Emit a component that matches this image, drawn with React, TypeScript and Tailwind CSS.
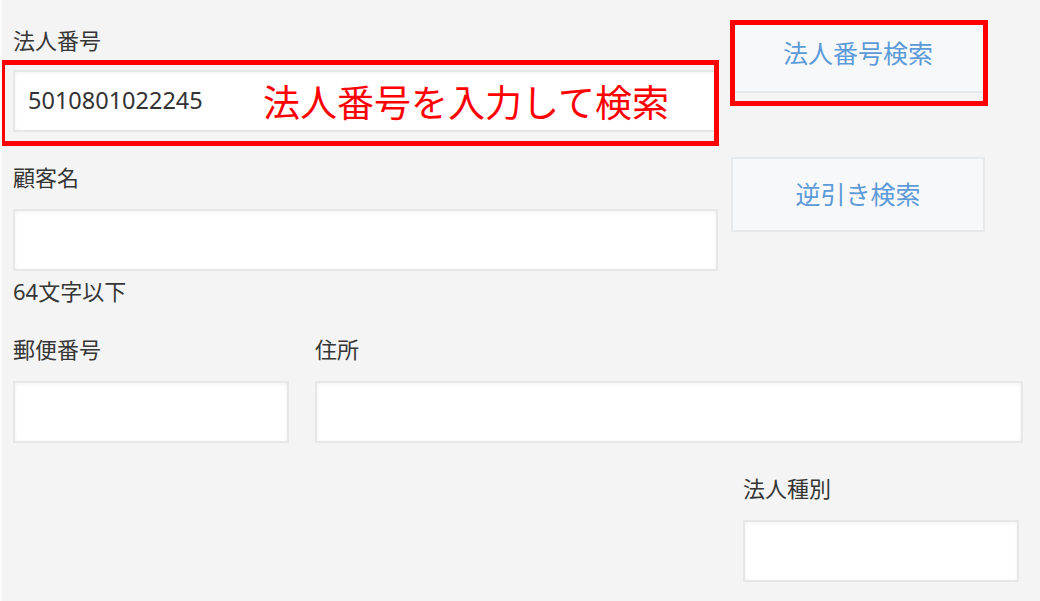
import React from "react";

const font = { fontFamily: '"Noto Sans", "Noto Sans CJK JP", sans-serif' };

function Label({ children, className = "" }: { children: React.ReactNode; className?: string }) {
  return (
    <div className={"text-[22px] leading-[24px] text-[#363636] whitespace-nowrap " + className}>{children}</div>
  );
}

function Field({ className = "", children }: { className?: string; children?: React.ReactNode }) {
  return (
    <div
      className={
        "relative h-[62px] bg-white border-2 border-[#e6e8e8] shadow-[inset_0_1px_4px_rgba(0,0,0,0.06)] flex items-center " +
        className
      }
    >
      {children}
    </div>
  );
}

function Btn({ children, className = "" }: { children: React.ReactNode; className?: string }) {
  return (
    <div
      className={
        "relative w-[254px] flex items-center justify-center bg-[#f7f8fa] border-2 border-[#e6e9eb] text-[25px] text-[#5d9ad8] " +
        className
      }
    >
      {children}
    </div>
  );
}

export default function App() {
  return (
    <div
      style={font}
      className="w-[1040px] h-[601px] overflow-hidden bg-[#f4f4f4] border-l-2 border-[#fbfbfb] pl-[11px]"
    >
      {/* Row A */}
      <div className="flex items-start pt-[20px] gap-[13px]">
        <div className="w-[705px] flex flex-col">
          <Label className="mt-[8px]">法人番号</Label>
          <Field className="mt-[18px] pl-[13px]">
            <span className="text-[23.5px] text-[#333]">5010801022245</span>
            <span className="absolute left-[248px] top-[12px] text-[37px] leading-[37px] text-[#ff0000] whitespace-nowrap">
              法人番号を入力して検索
            </span>
            <div className="absolute -top-[12px] -left-[15px] -right-[3px] -bottom-[16px] border-[5px] border-[#ff0000] pointer-events-none" />
          </Field>
        </div>
        <Btn className="h-[73px] pb-[5px]">
          法人番号検索
          <div className="absolute -top-[2px] -left-[3px] -right-[5px] -bottom-[15px] border-[5px] border-[#ff0000]" />
        </Btn>
      </div>

      {/* Row B */}
      <div className="flex items-start gap-[13px]">
        <div className="w-[705px] flex flex-col">
          <Label className="mt-[33px]">顧客名</Label>
          <Field className="mt-[20px]" />
          <Label className="mt-[8px]">64文字以下</Label>
        </div>
        <Btn className="h-[75px] mt-[25px]">逆引き検索</Btn>
      </div>

      {/* Row C */}
      <div className="flex items-start gap-[26px] mt-[34px]">
        <div className="w-[276px] flex flex-col">
          <Label>郵便番号</Label>
          <Field className="mt-[20px]" />
        </div>
        <div className="w-[708px] flex flex-col">
          <Label>住所</Label>
          <Field className="mt-[20px]" />
        </div>
      </div>

      {/* Row D */}
      <div className="flex mt-[33px] pl-[730px]">
        <div className="w-[276px] flex flex-col">
          <Label>法人種別</Label>
          <Field className="mt-[20px]" />
        </div>
      </div>
    </div>
  );
}
